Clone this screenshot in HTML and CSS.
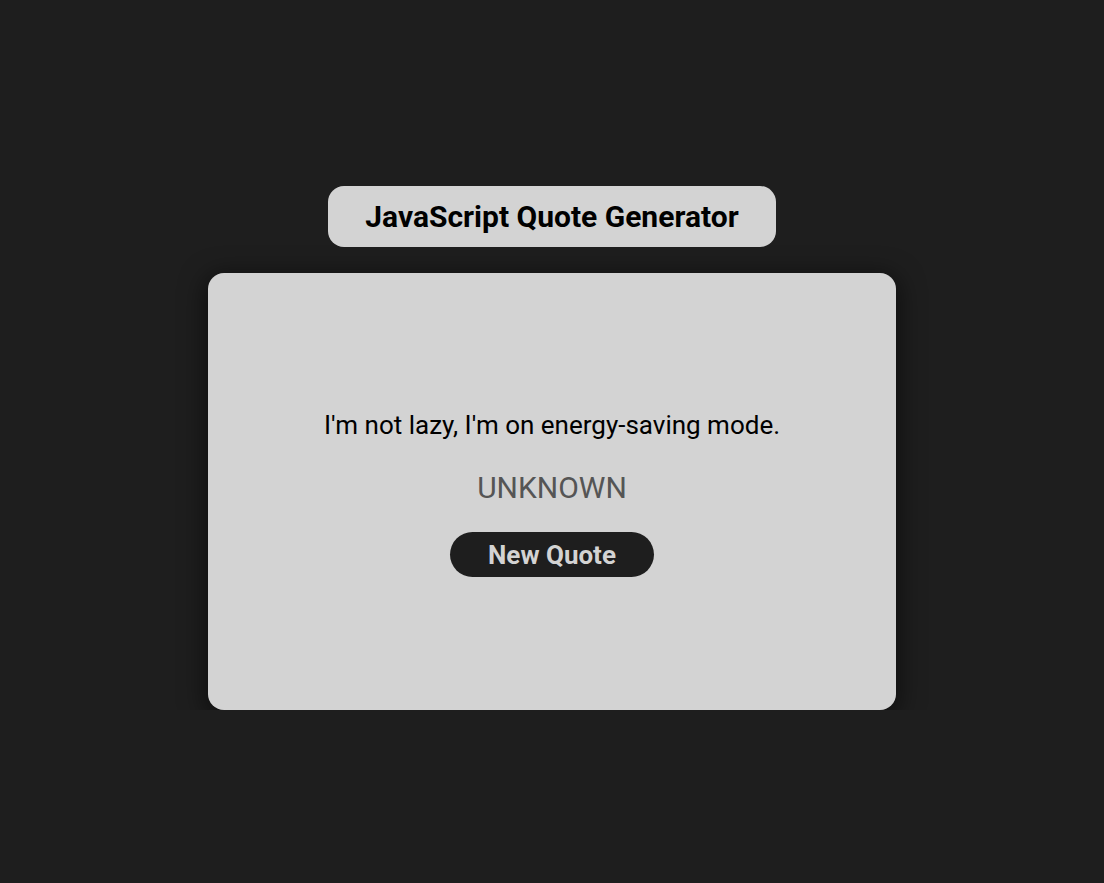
FILE: index.html
```html
<!DOCTYPE html>
<html lang="en">
<head>
<meta charset="utf-8">
<title>JavaScript Quote Generator</title>
<link rel="stylesheet" href="styles.css">
</head>
<body>
  <main class="page">
    <h1 class="title">JavaScript Quote Generator</h1>
    <section class="card">
      <p class="quote">I'm not lazy, I'm on energy-saving mode.</p>
      <p class="author">UNKNOWN</p>
      <button class="btn" type="button">New Quote</button>
    </section>
  </main>
</body>
</html>
```

FILE: styles.css
```css
html, body {
  margin: 0;
  padding: 0;
  background: #1e1e1e;
  font-family: Roboto, "Liberation Sans", sans-serif;
}

.page {
  display: flex;
  flex-direction: column;
  align-items: center;
  padding-top: 186px;
}

.title {
  margin: 0;
  width: 448px;
  height: 61px;
  box-sizing: border-box;
  display: flex;
  align-items: center;
  justify-content: center;
  background: #d3d3d3;
  color: #000;
  border-radius: 16px;
  font-size: 30px;
  font-weight: 700;
}

.card {
  margin-top: 26px;
  width: 688px;
  height: 437px;
  box-sizing: border-box;
  background: #d3d3d3;
  border-radius: 16px;
  box-shadow: 0 5px 24px 4px rgba(0, 0, 0, 0.5);
  display: flex;
  flex-direction: column;
  align-items: center;
  justify-content: center;
  padding-top: 4px;
}

.quote {
  margin: 0;
  font-size: 26px;
  line-height: 30px;
  color: #000;
}

.author {
  margin: 31px 0 0;
  font-size: 30px;
  line-height: 34px;
  color: #555;
}

.btn {
  margin-top: 27px;
  width: 204px;
  height: 45px;
  border: none;
  border-radius: 23px;
  background: #1e1e1e;
  color: #d3d3d3;
  font-family: Roboto, "Liberation Sans", sans-serif;
  font-size: 26px;
  font-weight: 700;
  padding: 0;
}
```
